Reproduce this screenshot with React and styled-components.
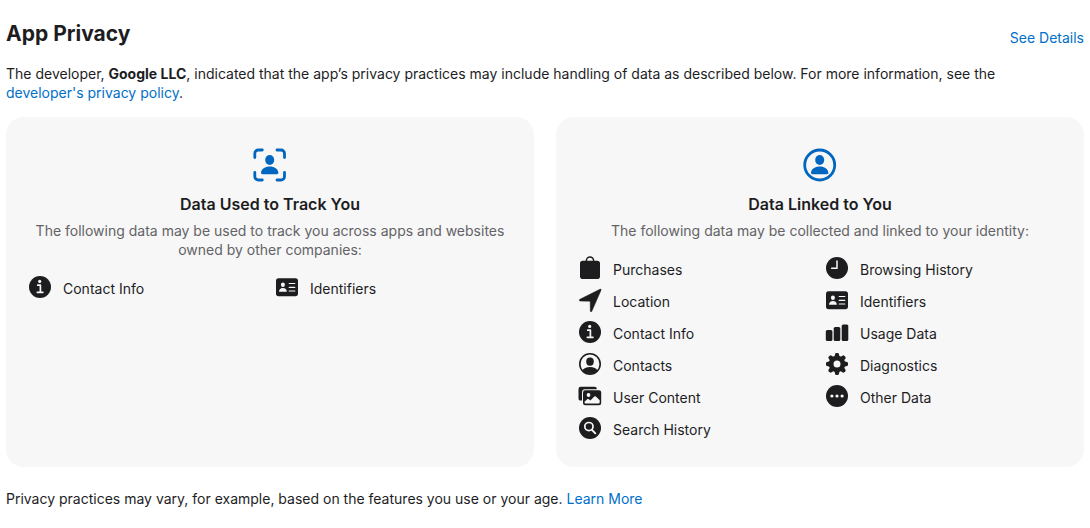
// External Dependencies
import React from 'react';
import styled, { createGlobalStyle } from 'styled-components';

// Styled Components
const GlobalStyle = createGlobalStyle`
  body {
    margin: 0;
    background: #fff;
    color: #1d1d1f;
    font-family: Inter, 'Liberation Sans', sans-serif;
    font-size: 14px;
    line-height: 19px;
  }
`

const Section = styled.section`
  padding: 20px 6px;
`

const Header = styled.header`
  display: flex;
  justify-content: space-between;
  align-items: flex-end;
  margin-bottom: 17px;
`

const Title = styled.h2`
  margin: 0;
  font-size: 21px;
  line-height: 27px;
  font-weight: 700;
`

const Link = styled.a`
  color: #0070c9;
  text-decoration: none;
  white-space: nowrap;

  &:hover {
    text-decoration: underline;
  }
`

const Text = styled.p`
  margin: 0;
`

const Strong = styled.strong`
  font-weight: 700;
`

const Cards = styled.div`
  display: grid;
  grid-template-columns: 1fr 1fr;
  gap: 22px;
  margin: 15px 0 22px;
`

const CardBox = styled.article`
  padding: 30px 22px 27px;
  border-radius: 18px;
  background: #f7f7f7;
`

const CardHead = styled.div`
  display: flex;
  flex-direction: column;
  align-items: center;
  text-align: center;
  color: #636366;
`

const CardIcon = styled.svg`
  width: 36px;
  height: 36px;
  color: #0066bf;
`

const CardTitle = styled.h3`
  margin: 11px 0 6px;
  color: #1d1d1f;
  font-size: 16px;
  line-height: 21px;
  font-weight: 600;
`

const List = styled.ul`
  display: grid;
  grid-template-columns: 1fr 1fr;
  grid-template-rows: repeat(${props => props.$rows}, auto);
  grid-auto-flow: column;
  gap: 8px 10px;
  margin: 16px 0 0;
  padding: 0;
  list-style: none;
`

const Item = styled.li`
  display: flex;
  gap: 11px;
`

const ItemIcon = styled.svg`
  flex: none;
  width: 24px;
  height: 24px;
`

const ItemText = styled.span`
  padding-top: 4px;
`

// Icon drawings, all on a 24 x 24 grid
const teeth = [0, 45, 90, 135, 180, 225, 270, 315];

const icons = {
    purchases: (
        <>
            <rect x="2" y="4.7" width="20" height="18.3" rx="2.8" fill="currentColor" />
            <path d="M8.4 6V4.6a3.6 3.6 0 0 1 7.2 0V6" fill="none" stroke="currentColor" strokeWidth="1.5" />
        </>
    ),
    location: (
        <path
            d="M1.9 11.3 22 1.2c.7-.3 1.3.2 1 1L13.8 23.3c-.4.9-1.5.7-1.5-.3l-.1-9.8-10-.1c-1.1 0-1.2-1.3-.3-1.8Z"
            fill="currentColor"
            stroke="currentColor"
            strokeWidth="0.5"
        />
    ),
    contactInfo: (
        <>
            <circle cx="12" cy="12" r="11" fill="currentColor" />
            <circle cx="11.7" cy="6.4" r="1.6" fill="#f7f7f7" />
            <path
                d="M9.7 10.2h2.7v7M9.3 17.3h5.6"
                fill="none"
                stroke="#f7f7f7"
                strokeWidth="1.7"
                strokeLinecap="round"
                strokeLinejoin="round"
            />
        </>
    ),
    contacts: (
        <>
            <circle cx="12" cy="12" r="10.2" fill="none" stroke="currentColor" strokeWidth="1.6" />
            <ellipse cx="12" cy="9.6" rx="3.8" ry="4.2" fill="currentColor" />
            <path d="M4.4 18.6c1.1-2.3 4-3.6 7.6-3.6s6.5 1.3 7.6 3.6A10.2 10.2 0 0 1 4.4 18.6Z" fill="currentColor" />
        </>
    ),
    userContent: (
        <>
            <rect x="0.5" y="2.8" width="18.3" height="13.8" rx="2.2" fill="currentColor" />
            <rect x="4" y="5.2" width="20.5" height="17" rx="3" fill="#f7f7f7" />
            <rect x="5" y="6.2" width="18.2" height="15" rx="2.2" fill="currentColor" />
            <circle cx="10.5" cy="11" r="1.9" fill="#f7f7f7" />
            <path
                d="M6.5 17.8 9.2 15.2q.8-.7 1.6 0l1.6 1.3 3.9-3.9q.8-.7 1.6 0l3.8 3.7v2q0 1.2-1.2 1.2H7.7q-1.2 0-1.2-1.2Z"
                fill="#f7f7f7"
            />
        </>
    ),
    search: (
        <>
            <circle cx="12" cy="12" r="11" fill="currentColor" />
            <circle cx="10.9" cy="10.6" r="4.1" fill="none" stroke="#f7f7f7" strokeWidth="1.7" />
            <path d="m14 13.8 3.3 3.5" stroke="#f7f7f7" strokeWidth="1.9" strokeLinecap="round" />
        </>
    ),
    history: (
        <>
            <circle cx="12" cy="12" r="11" fill="currentColor" />
            <path
                d="M12 4.9v7.4H6.6"
                fill="none"
                stroke="#f7f7f7"
                strokeWidth="1.5"
                strokeLinecap="round"
                strokeLinejoin="round"
            />
        </>
    ),
    identifiers: (
        <>
            <rect x="1" y="3.2" width="22" height="18" rx="2.6" fill="currentColor" />
            <ellipse cx="7.9" cy="9.7" rx="2" ry="2.3" fill="#f7f7f7" />
            <path d="M4 16.7c0-2.200 1.500-3.700 3.900-3.700s3.900 1.500 3.900 3.700Z" fill="#f7f7f7" />
            <path
                d="M14.2 8.5h5.6M14.2 12.3h5.6M14.2 16h5.6"
                stroke="#f7f7f7"
                strokeWidth="1.2"
                strokeLinecap="round"
            />
        </>
    ),
    usage: (
        <g fill="currentColor">
            <rect x="0.8" y="9.9" width="6.6" height="11" rx="1.5" />
            <rect x="8.7" y="7.1" width="6.6" height="13.8" rx="1.5" />
            <rect x="16.7" y="4.6" width="6.6" height="16.3" rx="1.5" />
        </g>
    ),
    diagnostics: (
        <>
            {teeth.map(angle => (
                <path
                    key={angle}
                    d="M9.1 6 10.1 1.9q.3-.9 1.1-.9h1.6q.8 0 1.1.9L14.9 6Z"
                    transform={`rotate(${angle} 12 12)`}
                    fill="currentColor"
                />
            ))}
            <circle cx="12" cy="12" r="5.9" fill="none" stroke="currentColor" strokeWidth="4.8" />
        </>
    ),
    other: (
        <>
            <circle cx="12" cy="12" r="11" fill="currentColor" />
            <g fill="#f7f7f7">
                <circle cx="6.9" cy="12" r="1.6" />
                <circle cx="12" cy="12" r="1.6" />
                <circle cx="17.1" cy="12" r="1.6" />
            </g>
        </>
    ),
}

const person = (
    <g fill="currentColor">
        <ellipse cx="17.7" cy="13" rx="4.5" ry="5" />
        <path d="M10.700 27.200q-2 0-1.700-1.800c.5-3.300 3.900-5.900 8.700-5.900s8.200 2.600 8.700 5.900q.3 1.800-1.700 1.800Z" />
    </g>
)

const cards = [
    {
        title: 'Data Used to Track You',
        text: 'The following data may be used to track you across apps and websites owned by other companies:',
        icon: (
            <path
                d="M2.800 10.500V6.500A3.500 3.500 0 0 1 6.300 3H10.300M25 3H29A3.500 3.500 0 0 1 32.500 6.500V10.500M32.500 25.500V29.500A3.500 3.500 0 0 1 29 33H25M10.300 33H6.300A3.500 3.500 0 0 1 2.800 29.500V25.500"
                fill="none"
                stroke="currentColor"
                strokeWidth="2.8"
                strokeLinecap="round"
            />
        ),
        rows: 1,
        items: [
            { icon: 'contactInfo', label: 'Contact Info' },
            { icon: 'identifiers', label: 'Identifiers' },
        ],
    },
    {
        title: 'Data Linked to You',
        text: 'The following data may be collected and linked to your identity:',
        icon: <circle cx="17.7" cy="18" r="15" fill="none" stroke="currentColor" strokeWidth="2.8" />,
        rows: 6,
        items: [
            { icon: 'purchases', label: 'Purchases' },
            { icon: 'location', label: 'Location' },
            { icon: 'contactInfo', label: 'Contact Info' },
            { icon: 'contacts', label: 'Contacts' },
            { icon: 'userContent', label: 'User Content' },
            { icon: 'search', label: 'Search History' },
            { icon: 'history', label: 'Browsing History' },
            { icon: 'identifiers', label: 'Identifiers' },
            { icon: 'usage', label: 'Usage Data' },
            { icon: 'diagnostics', label: 'Diagnostics' },
            { icon: 'other', label: 'Other Data' },
        ],
    },
]

// Component Definition
const Card = ({ card }) => (
    <CardBox>
        <CardHead>
            <CardIcon viewBox="0 0 36 36" aria-hidden="true">
                {card.icon}
                {person}
            </CardIcon>
            <CardTitle>{card.title}</CardTitle>
            <Text>{card.text}</Text>
        </CardHead>
        <List $rows={card.rows}>
            {card.items.map(item => (
                <Item key={item.label}>
                    <ItemIcon viewBox="0 0 24 24" aria-hidden="true">{icons[item.icon]}</ItemIcon>
                    <ItemText>{item.label}</ItemText>
                </Item>
            ))}
        </List>
    </CardBox>
)

const App = () => {
    return (
        <>
            <GlobalStyle />
            <Section>
                <Header>
                    <Title>App Privacy</Title>
                    <Link href="#details">See Details</Link>
                </Header>
                <Text>
                    The developer, <Strong>Google LLC</Strong>, indicated that the app’s privacy practices may
                    include handling of data as described below. For more information, see
                    the <Link href="#policy">developer's privacy policy</Link>.
                </Text>
                <Cards>
                    {cards.map(card => <Card key={card.title} card={card} />)}
                </Cards>
                <Text>
                    Privacy practices may vary, for example, based on the features you use or your
                    age. <Link href="#learn-more">Learn More</Link>
                </Text>
            </Section>
        </>
    )
}

export default App;
